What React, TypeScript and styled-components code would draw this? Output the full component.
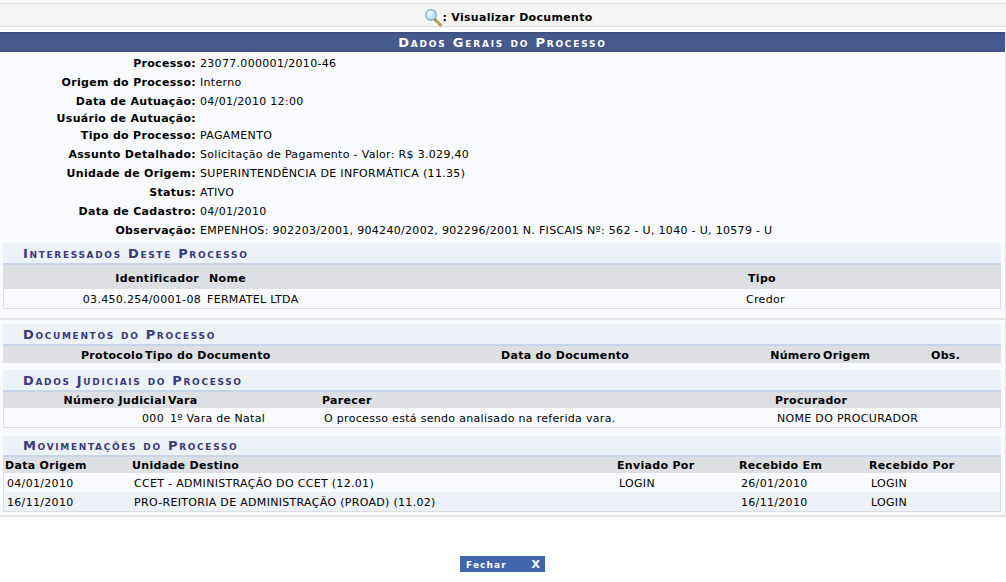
import styled, { createGlobalStyle } from 'styled-components';

const GlobalStyle = createGlobalStyle`
  html, body {
    margin: 0;
    padding: 0;
    background: #fff;
    color: #000;
    font-family: "DejaVu Sans", Verdana, sans-serif;
    font-size: 11px;
    letter-spacing: 0.31px;
  }
`;

const INFO_ROWS = [
  ['Processo:', '23077.000001/2010-46'],
  ['Origem do Processo:', 'Interno'],
  ['Data de Autuação:', '04/01/2010 12:00'],
  ['Usuário de Autuação:', ''],
  ['Tipo do Processo:', 'PAGAMENTO'],
  ['Assunto Detalhado:', 'Solicitação de Pagamento - Valor: R$ 3.029,40'],
  ['Unidade de Origem:', 'SUPERINTENDÊNCIA DE INFORMÁTICA (11.35)'],
  ['Status:', 'ATIVO'],
  ['Data de Cadastro:', '04/01/2010'],
  ['Observação:', 'EMPENHOS: 902203/2001, 904240/2002, 902296/2001 N. FISCAIS Nº: 562 - U, 1040 - U, 10579 - U'],
];

const MOVIMENTACOES = [
  ['04/01/2010', 'CCET - ADMINISTRAÇÃO DO CCET (12.01)', 'LOGIN', '26/01/2010', 'LOGIN'],
  ['16/11/2010', 'PRO-REITORIA DE ADMINISTRAÇÃO (PROAD) (11.02)', '', '16/11/2010', 'LOGIN'],
];

const SearchIcon = () => (
  <svg width="19" height="18" viewBox="0 0 19 18">
    <defs>
      <radialGradient id="lens" cx="35%" cy="30%" r="75%">
        <stop offset="0%" stopColor="#f2fbff" />
        <stop offset="100%" stopColor="#9fd6f2" />
      </radialGradient>
    </defs>
    <path d="M11 10.5 L16.5 16" stroke="#8f7440" strokeWidth="2.8" strokeLinecap="round" />
    <path d="M12 11.5 L16.5 16" stroke="#e3b75a" strokeWidth="1.2" strokeLinecap="round" />
    <circle cx="7" cy="6" r="5.3" fill="url(#lens)" stroke="#8aa9bf" strokeWidth="1.2" />
  </svg>
);

const App = () => {
  return (
    <Page>
      <GlobalStyle />
      <Legend>
        <SearchIcon />
        <LegendText>: Visualizar Documento</LegendText>
      </Legend>
      <Panel>
        <PanelTitle>Dados Gerais do Processo</PanelTitle>
        <InfoList>
          {INFO_ROWS.map(([label, value]) => (
            <InfoRow key={label} $empty={!value}>
              <InfoLabel>{label}</InfoLabel>
              <span>{value}</span>
            </InfoRow>
          ))}
        </InfoList>

        <Caption $height={20}>Interessados Deste Processo</Caption>
        <Grid $columns="200px 539px 1fr" $bordered>
          <HeadRow $height={24} $line={27}>
            <HeadCell $right $inset>Identificador</HeadCell>
            <HeadCell $inset>Nome</HeadCell>
            <HeadCell $inset>Tipo</HeadCell>
          </HeadRow>
          <BodyRow>
            <Cell $right>03.450.254/0001-08</Cell>
            <Cell>FERMATEL LTDA</Cell>
            <Cell>Credor</Cell>
          </BodyRow>
        </Grid>

        <Divider />

        <Caption $height={20}>Documentos do Processo</Caption>
        <Grid $columns="141px 356px 268px 54px 108px 1fr">
          <HeadRow $height={17}>
            <HeadCell $right>Protocolo</HeadCell>
            <HeadCell>Tipo do Documento</HeadCell>
            <HeadCell>Data do Documento</HeadCell>
            <HeadCell $right>Número</HeadCell>
            <HeadCell>Origem</HeadCell>
            <HeadCell>Obs.</HeadCell>
          </HeadRow>
        </Grid>

        <Caption $height={20} $gap={7}>Dados Judiciais do Processo</Caption>
        <Grid $columns="163px 154px 453px 1fr" $bordered>
          <HeadRow $height={16}>
            <HeadCell $right>Número Judicial</HeadCell>
            <HeadCell>Vara</HeadCell>
            <HeadCell>Parecer</HeadCell>
            <HeadCell>Procurador</HeadCell>
          </HeadRow>
          <BodyRow>
            <Cell $right>000</Cell>
            <Cell>1º Vara de Natal</Cell>
            <Cell>O processo está sendo analisado na referida vara.</Cell>
            <Cell>NOME DO PROCURADOR</Cell>
          </BodyRow>
        </Grid>

        <Caption $height={19} $gap={8}>Movimentações do Processo</Caption>
        <Grid $columns="127px 485px 122px 130px 1fr" $bordered>
          <HeadRow $height={16}>
            <HeadCell>Data Origem</HeadCell>
            <HeadCell>Unidade Destino</HeadCell>
            <HeadCell>Enviado Por</HeadCell>
            <HeadCell>Recebido Em</HeadCell>
            <HeadCell>Recebido Por</HeadCell>
          </HeadRow>
          {MOVIMENTACOES.map((row, index) => (
            <BodyRow key={row[0]} $striped={index % 2 === 1}>
              {row.map((value, cell) => (
                <Cell key={cell}>{value}</Cell>
              ))}
            </BodyRow>
          ))}
        </Grid>
      </Panel>
      <Actions>
        <CloseButton>
          <span>Fechar</span>
          <CloseMark>X</CloseMark>
        </CloseButton>
      </Actions>
    </Page>
  );
};

const Page = styled.div`
  width: 1006px;
  height: 582px;
  overflow: hidden;
  padding-top: 3px;
  box-sizing: border-box;
`;
const Legend = styled.div`
  display: flex;
  justify-content: center;
  align-items: center;
  box-sizing: border-box;
  height: 24px;
  padding: 6px 0 0 11px;
  background: #f5f5f5;
  border-top: 1px solid #ddd;
  border-bottom: 1px solid #ddd;
`;
const LegendText = styled.span`
  margin-left: -1px;
  font-weight: bold;
  line-height: 20px;
`;
const Panel = styled.div`
  margin-top: 5px;
  padding-bottom: 3px;
  background: #fafbfe;
  border-bottom: 2px solid #e4e4e4;
  border-right: 1px solid #e4e4e4;
`;
const PanelTitle = styled.div`
  height: 20px;
  line-height: 22px;
  background: linear-gradient(#3a4a7b, #46598c 15%, #46598c 85%, #3f5184);
  color: #fff;
  font-size: 13px;
  font-weight: bold;
  font-variant: small-caps;
  letter-spacing: 1.78px;
  text-align: center;
`;
const InfoList = styled.div`
  display: flex;
  flex-direction: column;
  padding: 2px 0 3px;
`;
const InfoRow = styled.div<{ $empty?: boolean }>`
  display: grid;
  grid-template-columns: 196px 1fr;
  column-gap: 4px;
  height: ${props => (props.$empty ? 15 : 19)}px;
  line-height: ${props => (props.$empty ? 15 : 19)}px;
`;
const InfoLabel = styled.span`
  font-weight: bold;
  text-align: right;
  white-space: nowrap;
`;
const Caption = styled.div<{ $height: number; $gap?: number }>`
  margin: ${props => props.$gap ?? 0}px 4px 0 3px;
  padding-left: 20px;
  height: ${props => props.$height}px;
  line-height: ${props => props.$height + 1}px;
  background: #edf1f8;
  border-bottom: 2px solid #c8d4e8;
  color: #3a3a78;
  font-size: 13px;
  font-weight: bold;
  font-variant: small-caps;
  letter-spacing: 1.66px;
`;
const Grid = styled.div<{ $columns: string; $bordered?: boolean }>`
  --columns: ${props => props.$columns};
  margin: 0 4px 0 3px;
  box-sizing: border-box;
  ${props => props.$bordered && 'border: 1px solid #ddd; border-top: none;'}
`;
const HeadRow = styled.div<{ $height: number; $line?: number }>`
  display: grid;
  grid-template-columns: var(--columns);
  height: ${props => props.$height}px;
  line-height: ${props => props.$line ?? props.$height + 2}px;
  background: #dedfe3;
`;
const BodyRow = styled.div<{ $striped?: boolean }>`
  display: grid;
  grid-template-columns: var(--columns);
  height: 19px;
  line-height: 21px;
  background: ${props => (props.$striped ? '#edf1f8' : '#fafbfe')};
`;
const HeadCell = styled.div<{ $right?: boolean; $inset?: boolean }>`
  padding: 0 ${props => (props.$inset ? 5 : 1)}px;
  font-weight: bold;
  white-space: nowrap;
  text-align: ${props => (props.$right ? 'right' : 'left')};
`;
const Cell = styled.div<{ $right?: boolean }>`
  padding: 0 3px;
  white-space: nowrap;
  text-align: ${props => (props.$right ? 'right' : 'left')};
`;
const Divider = styled.div`
  height: 2px;
  margin-top: 9px;
  margin-bottom: 4px;
  background: #e4e4e4;
`;
const Actions = styled.div`
  display: flex;
  justify-content: center;
  margin-top: 39px;
  padding-right: 1px;
`;
const CloseButton = styled.div`
  display: flex;
  justify-content: space-between;
  width: 85px;
  height: 16px;
  box-sizing: border-box;
  padding: 0 5px 0 6px;
  background: #4065ab;
  color: #fff;
  font-size: 9px;
  font-weight: bold;
  letter-spacing: 1.1px;
  line-height: 18px;
`;
const CloseMark = styled.span`
  font-size: 11px;
  letter-spacing: 0;
`;

export default App;
